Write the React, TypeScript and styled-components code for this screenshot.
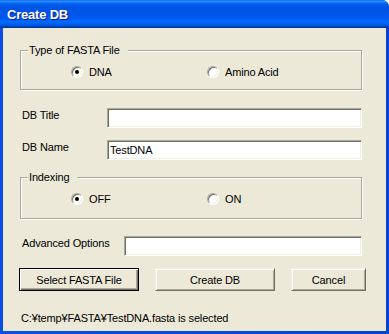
import styled, { createGlobalStyle } from "styled-components";

const GlobalStyle = createGlobalStyle`
  html, body {
    margin: 0;
    padding: 0;
    background: #ffffff;
  }
  body {
    font-family: "Liberation Sans", Arial, sans-serif;
    font-size: 11px;
    letter-spacing: -0.15px;
    color: #000;
  }
`;

const Window = styled.div`
  width: 389px;
  height: 334px;
  display: flex;
  flex-direction: column;
  border-top-right-radius: 7px;
  overflow: hidden;
  background: #0842d4;
`;

const TitleBar = styled.div`
  height: 28px;
  box-sizing: border-box;
  padding: 2px 0 0 7px;
  line-height: 26px;
  font-size: 13px;
  font-weight: bold;
  letter-spacing: -0.2px;
  color: #fff;
  text-shadow: 1px 1px 0 #0f1b89;
  background: linear-gradient(
    to bottom,
    #0058ee 0%,
    #3593ff 4%,
    #288eff 6%,
    #127dff 8%,
    #036ffc 10%,
    #0262ee 14%,
    #0057e5 20%,
    #0054e3 24%,
    #0055eb 56%,
    #005bf5 66%,
    #026afe 76%,
    #0062ef 86%,
    #0052d6 92%,
    #0040ab 96%,
    #003092 100%
  );
`;

const Frame = styled.div`
  flex: 1;
  display: flex;
  padding: 0 3px 3px;
  background: linear-gradient(to right, #0b4fe4, #0842d4);
`;

const Body = styled.div`
  flex: 1;
  display: flex;
  flex-direction: column;
  background: #ece9d8;
  padding: 16px 20px 0 16px;
`;

const GroupBox = styled.fieldset<{ $bottom: number; $top: number }>`
  margin: ${p => p.$top}px 4px 0 1px;
  padding: 8px 0 ${p => p.$bottom}px 0;
  min-width: 0;
  border: 1px solid #aca899;
  box-shadow: inset 1px 1px 0 #fff, 1px 1px 0 #fff;
`;

const Legend = styled.legend`
  margin-left: 7px;
  padding: 0 8px 0 1px;
  line-height: 13px;
  background: #ece9d8;
`;

const RadioRow = styled.div`
  display: flex;
  align-items: center;
  height: 14px;
  padding-left: 50px;
`;

const RadioOption = styled.label`
  display: flex;
  align-items: center;
  gap: 6px;
  width: 136px;
  line-height: 13px;
`;

const RadioCircle = styled.span<{ $checked?: boolean }>`
  width: 12px;
  height: 12px;
  box-sizing: border-box;
  display: flex;
  align-items: center;
  justify-content: center;
  border-radius: 50%;
  border: 1px solid;
  border-color: #aca899 #fff #fff #aca899;
  box-shadow: inset 1px 1px 0 #716f64, inset -1px -1px 0 #f1efe2;
  background: #fff;
  &::after {
    content: "";
    width: 4px;
    height: 4px;
    border-radius: 50%;
    background: ${p => (p.$checked ? "#000" : "transparent")};
  }
`;

const FieldRow = styled.div<{ $top: number }>`
  display: flex;
  align-items: flex-start;
  margin: ${p => p.$top}px 4px 0 3px;
`;

const FieldLabel = styled.span<{ $width: number }>`
  width: ${p => p.$width}px;
  flex: none;
  padding-top: 1px;
  line-height: 13px;
`;

const TextBox = styled.input`
  flex: 1;
  min-width: 0;
  height: 20px;
  box-sizing: border-box;
  margin: 0;
  padding: 0 2px;
  border: 1px solid;
  border-color: #aca899 #fff #fff #aca899;
  box-shadow: inset 1px 1px 0 #716f64, inset -1px -1px 0 #f1efe2;
  background: #fff;
  font: inherit;
  letter-spacing: inherit;
  color: #000;
  outline: none;
`;

const ButtonRow = styled.div`
  display: flex;
  gap: 16px;
  margin-top: 12px;
`;

const Button = styled.button<{ $width: number; $default?: boolean }>`
  width: ${p => p.$width}px;
  height: 23px;
  margin: 0;
  padding: 0;
  font: inherit;
  letter-spacing: inherit;
  color: #000;
  background: #ece9d8;
  border: 1px solid;
  border-color: ${p =>
    p.$default ? "#000" : "#f1efe2 #716f64 #716f64 #f1efe2"};
  box-shadow: ${p =>
    p.$default
      ? "inset 1px 1px 0 #fff, inset -1px -1px 0 #716f64, inset -2px -2px 0 #aca899"
      : "inset 1px 1px 0 #fff, inset -1px -1px 0 #aca899"};
`;

const Status = styled.div`
  margin: 21px 0 0 2px;
  line-height: 13px;
`;

const Radio = ({ label, checked }: { label: string; checked?: boolean }) => (
  <RadioOption>
    <RadioCircle $checked={checked} />
    {label}
  </RadioOption>
);

const App = () => {
  return (
    <>
      <GlobalStyle />
      <Window>
        <TitleBar>Create DB</TitleBar>
        <Frame>
          <Body>
            <GroupBox $top={0} $bottom={10}>
              <Legend>Type of FASTA File</Legend>
              <RadioRow>
                <Radio label="DNA" checked />
                <Radio label="Amino Acid" />
              </RadioRow>
            </GroupBox>

            <FieldRow $top={18}>
              <FieldLabel $width={85}>DB Title</FieldLabel>
              <TextBox defaultValue="" />
            </FieldRow>
            <FieldRow $top={12}>
              <FieldLabel $width={85}>DB Name</FieldLabel>
              <TextBox defaultValue="TestDNA" />
            </FieldRow>

            <GroupBox $top={11} $bottom={12}>
              <Legend>Indexing</Legend>
              <RadioRow>
                <Radio label="OFF" checked />
                <Radio label="ON" />
              </RadioRow>
            </GroupBox>

            <FieldRow $top={17}>
              <FieldLabel $width={102}>Advanced Options</FieldLabel>
              <TextBox defaultValue="" />
            </FieldRow>

            <ButtonRow>
              <Button $width={120} $default>
                Select FASTA File
              </Button>
              <Button $width={120}>Create DB</Button>
              <Button $width={75}>Cancel</Button>
            </ButtonRow>

            <Status>C:¥temp¥FASTA¥TestDNA.fasta is selected</Status>
          </Body>
        </Frame>
      </Window>
    </>
  );
};

export default App;
